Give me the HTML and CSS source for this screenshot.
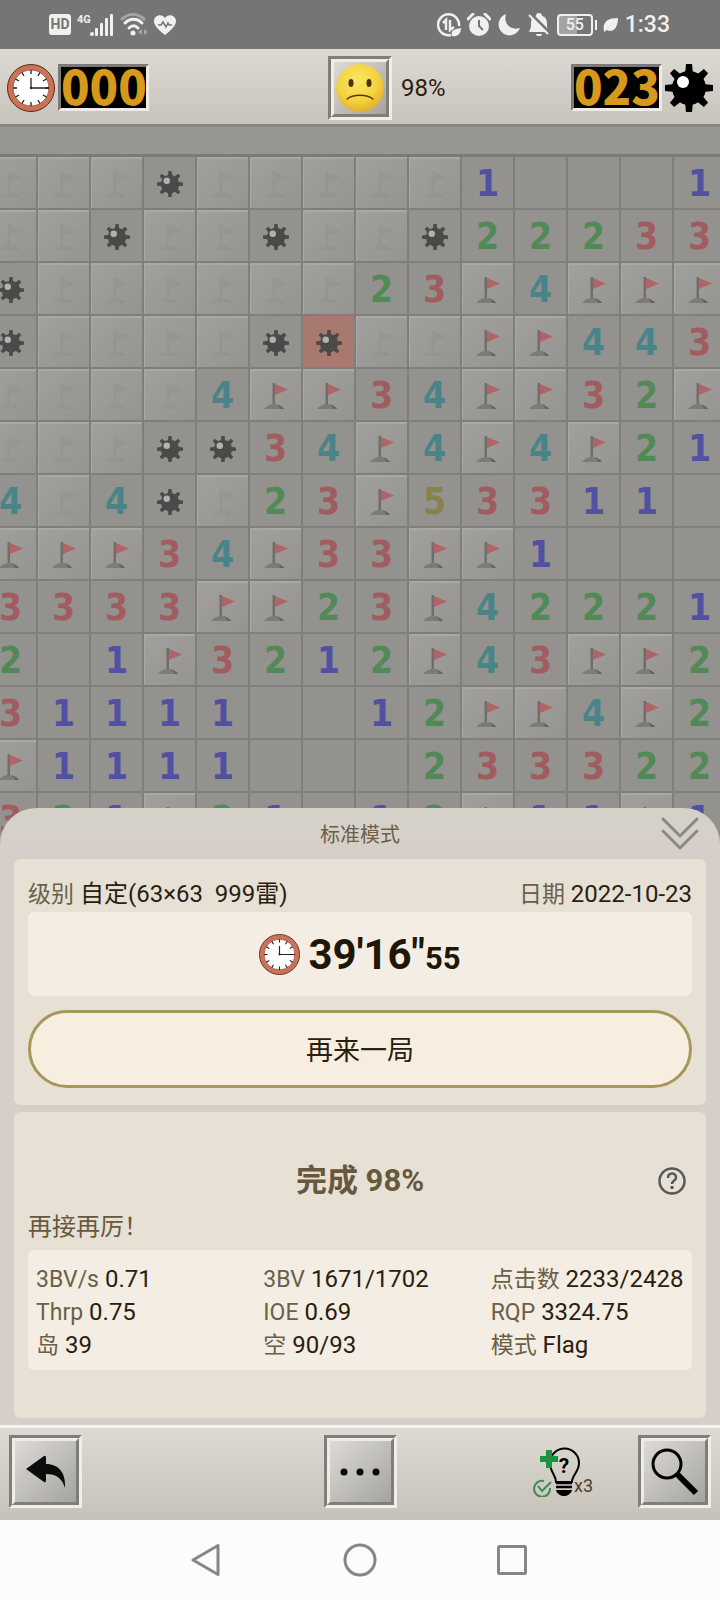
FILE: index.html
```html
<!DOCTYPE html>
<html lang="zh-CN">
<head>
  <meta charset="UTF-8">
  <meta name="viewport" content="width=device-width, initial-scale=1">
  <title>扫雷</title>
  <link rel="stylesheet" href="styles.css">
</head>
<body>
  <!-- Shared icons -->
  <svg class="icon-defs" aria-hidden="true">
    <symbol id="mine" viewBox="0 0 48 48">
      <g fill="currentColor">
        <circle cx="24" cy="24" r="17"/>
        <path d="M21 0h6l1 10h-8zM21 48h6l1-10h-8zM0 21v6l10 1v-8zM48 21v6l-10 1v-8z"/>
        <path transform="rotate(45 24 24)" d="M21 0h6l1 10h-8zM21 48h6l1-10h-8zM0 21v6l10 1v-8zM48 21v6l-10 1v-8z"/>
      </g>
      <circle class="mine-shine" cx="18" cy="18" r="6"/>
    </symbol>
    <symbol id="flag" viewBox="0 0 26 26">
      <path class="flag-cloth" d="M12 1L25 6.500L12 12z"/>
      <path class="flag-pole" d="M9.500 0h2.500v22h-2.500z"/>
      <path class="flag-base" d="M1 26C3 23 7 21 11 21S19 23 21 26z"/>
      <path class="flag-shade" d="M13 21C17 22 20 24 21 26H17C17 24 15 22 13 21z"/>
    </symbol>
    <symbol id="clock" viewBox="0 0 48 48">
      <circle cx="24" cy="24" r="23.500" fill="#cb7358" stroke="#5c2a1a" stroke-width="1"/>
      <circle cx="24" cy="24" r="18" fill="#fff" stroke="#a9583f" stroke-width="1"/>
      <g stroke="#222" stroke-width="1.300">
        <path d="M24 6v4M24 38v4M6 24h4M38 24h4"/>
        <path d="M15 8.500l2 3.500M33 8.500l-2 3.500M15 39.500l2-3.500M33 39.500l-2-3.500"/>
        <path d="M8.500 15l3.500 2M39.500 15l-3.500 2M8.500 33l3.500-2M39.500 33l-3.500-2"/>
        <path d="M24 14v10h18" fill="none"/>
      </g>
      <circle cx="24" cy="24" r="1.200" fill="#222"/>
    </symbol>
  </svg>

  <div class="status-bar">
    <div class="status-group">
      <span class="hd-badge">HD</span>
      <span class="signal">
        <span class="network">4G</span>
        <svg width="24" height="22" viewBox="0 0 24 22" fill="#f0f0f0">
          <circle cx="2" cy="20" r="2"/>
          <rect x="5" y="14" width="3" height="8" rx="1"/>
          <rect x="10" y="9" width="3" height="13" rx="1"/>
          <rect x="15" y="4" width="3" height="18" rx="1"/>
          <rect x="20" y="0" width="3" height="22" rx="1"/>
        </svg>
      </span>
      <svg width="28" height="24" viewBox="0 0 28 24" fill="none" stroke-width="3" stroke-linecap="round">
        <path d="M2 6C9 0 17 0 24 6" stroke="#a4a4a4"/>
        <path d="M5 10C10 5 17 5 22 10M9 15C12 12 15 12 18 15" stroke="#f0f0f0"/>
        <circle cx="13" cy="20" r="2.500" fill="#f0f0f0" stroke="none"/>
        <path d="M22 16v6l-4-3zM24 16v6l4-3z" fill="#a4a4a4" stroke="none"/>
      </svg>
      <svg width="22" height="20" viewBox="0 0 22 20">
        <path d="M11 20C5 15 0 11 0 6C0 0 8-2 11 3C14-2 22 0 22 6C22 11 17 15 11 20z" fill="#f0f0f0"/>
        <path d="M4 10h3l2-3l3 5l2-4l1 2h3" fill="none" stroke="#757575" stroke-width="1.500"/>
      </svg>
    </div>
    <div class="status-group">
      <svg width="24" height="24" viewBox="0 0 24 24" fill="none" stroke="#f0f0f0">
        <path d="M14 22A10.500 10.500 0 1 1 22 13" stroke-width="2.500"/>
        <path d="M6 10l3-3v10M13 7v10l4-3" stroke-width="2.500"/>
        <path d="M15 23C13 17 18 16 24 15C24 22 19 24 15 23z" fill="#f0f0f0" stroke="none"/>
      </svg>
      <svg width="24" height="24" viewBox="0 0 24 24">
        <circle cx="12" cy="13" r="10" fill="#f0f0f0"/>
        <path d="M1 6L6 1M23 6L18 1" stroke="#f0f0f0" stroke-width="3" stroke-linecap="round"/>
        <path d="M12 7v6l4 4" fill="none" stroke="#757575" stroke-width="2"/>
      </svg>
      <svg width="24" height="24" viewBox="0 0 24 24">
        <path d="M9 1A11 11 0 1 0 23 15C14 18 6 11 9 1z" fill="#f0f0f0"/>
      </svg>
      <svg width="24" height="24" viewBox="0 0 24 24">
        <path d="M9 3A3 3 0 0 1 15 3C19 4 20 7 20 11V14L22 19H2L4 14V9C4 6 6 4 9 3zM9 21H15A3 2 0 0 1 9 21z" fill="#f0f0f0"/>
        <path d="M4 1L24 21" stroke="#757575" stroke-width="3"/>
        <path d="M2 2L21 21" stroke="#f0f0f0" stroke-width="2"/>
      </svg>
      <span class="battery"><span class="battery-level">55</span></span>
      <svg width="16" height="16" viewBox="0 0 16 16">
        <path d="M1 14C-1 5 5 1 15 1C15 11 10 16 4 13L1 15zM3 12L11 5L4 11z" fill="#f0f0f0"/>
      </svg>
      <span class="time">1:33</span>
    </div>
  </div>

  <header class="game-header">
    <div class="counter-group">
      <svg class="header-icon"><use href="#clock"/></svg>
      <span class="counter">000</span>
    </div>
    <button class="bevel-btn face-btn" aria-label="新游戏">
      <span class="bevel-inner">
        <svg width="50" height="50" viewBox="0 0 50 50">
          <defs>
            <radialGradient id="face-fill" cx="45%" cy="35%" r="70%">
              <stop offset="0" stop-color="#fbe765"/>
              <stop offset="0.600" stop-color="#f4d240"/>
              <stop offset="1" stop-color="#dfa82c"/>
            </radialGradient>
          </defs>
          <circle cx="25" cy="25" r="24" fill="url(#face-fill)"/>
          <ellipse cx="16" cy="20" rx="2.500" ry="4" fill="#4a3008"/>
          <ellipse cx="34" cy="20" rx="2.500" ry="4" fill="#4a3008"/>
          <path d="M12 36C18 31 32 31 38 36" fill="none" stroke="#5a3a0a" stroke-width="1.600" stroke-linecap="round"/>
        </svg>
      </span>
    </button>
    <div class="header-right">
      <span class="progress">98%</span>
      <div class="counter-group">
        <span class="counter">023</span>
        <svg class="header-icon header-mine"><use href="#mine"/></svg>
      </div>
    </div>
  </header>

  <main class="board-wrap">
    <div class="board" id="board"></div>
  </main>

  <section class="sheet">
    <div class="sheet-head">
      <h2 class="sheet-title">标准模式</h2>
      <button class="collapse-btn" aria-label="收起">
        <svg width="38" height="34" viewBox="0 0 38 34" fill="none" stroke="#8a8886" stroke-width="3" stroke-linecap="round">
          <path d="M2 2L19 19L36 2M2 14L19 31L36 14"/>
        </svg>
      </button>
    </div>

    <div class="card result-card">
      <div class="info-row">
        <span><span class="label">级别</span> 自定(63×63&nbsp; 999雷)</span>
        <span><span class="label">日期</span> 2022-10-23</span>
      </div>
      <div class="time-box">
        <svg class="time-icon"><use href="#clock"/></svg>
        <span class="time-value">39'16"<small>55</small></span>
      </div>
      <button class="again-btn">再来一局</button>
    </div>

    <div class="card stats-card">
      <div class="stats-head">
        <h3 class="stats-title">完成 98%</h3>
        <button class="help-btn" aria-label="帮助">
          <svg width="28" height="28" viewBox="0 0 28 28" fill="none" stroke="#5a5856">
            <circle cx="14" cy="14" r="12.500" stroke-width="2.500"/>
            <path d="M10 11C10 5 18 5 18 10.500C18 13.500 14 13.500 14 17" stroke-width="2.500"/>
            <path d="M14 19v3" stroke-width="3"/>
          </svg>
        </button>
      </div>
      <p class="cheer">再接再厉！</p>
      <div class="stats">
        <span><span class="label">3BV/s</span> 0.71</span>
        <span><span class="label">3BV</span> 1671/1702</span>
        <span><span class="label">点击数</span> 2233/2428</span>
        <span><span class="label">Thrp</span> 0.75</span>
        <span><span class="label">IOE</span> 0.69</span>
        <span><span class="label">RQP</span> 3324.75</span>
        <span><span class="label">岛</span> 39</span>
        <span><span class="label">空</span> 90/93</span>
        <span><span class="label">模式</span> Flag</span>
      </div>
    </div>
  </section>

  <footer class="toolbar">
    <button class="bevel-btn tool-btn" aria-label="返回">
      <span class="bevel-inner">
        <svg width="40" height="34" viewBox="0 0 40 34">
          <path d="M0 14L18 1Q20 0 20 3V9C33 9 40 18 39 33C36 23 30 19 20 19V25Q20 28 18 27L0 14z" fill="#0c0c0c"/>
        </svg>
      </span>
    </button>
    <button class="bevel-btn tool-btn" aria-label="更多">
      <span class="bevel-inner">
        <svg width="40" height="8" viewBox="0 0 40 8">
          <circle cx="4" cy="4" r="3.500"/>
          <circle cx="20" cy="4" r="3.500"/>
          <circle cx="36" cy="4" r="3.500"/>
        </svg>
      </span>
    </button>
    <div class="toolbar-right">
      <button class="hint-btn" aria-label="提示">
        <svg width="60" height="50" viewBox="0 0 60 50">
          <path d="M23 35C23 28 17 25 17 16A14 14 0 0 1 46 16C46 25 39 28 39 35z" fill="none" stroke="#000" stroke-width="2"/>
          <path d="M23 36h16M23 40h16" stroke="#000" stroke-width="2.500"/>
          <path d="M23 43h16C38 47 34 49 31 49S24 47 23 43z"/>
          <path d="M7 9h6v-6h6v6h6v6h-6v6h-6v-6h-6z" fill="#1f9141"/>
          <path d="M11 34A8 8 0 1 0 17 41M5 39l4 5l9-9" fill="none" stroke="#3d8a52" stroke-width="2"/>
          <text x="31" y="26" class="hint-mark">?</text>
          <text x="41" y="45" class="hint-count">x3</text>
        </svg>
      </button>
      <button class="bevel-btn tool-btn" aria-label="缩放">
        <span class="bevel-inner">
          <svg width="48" height="48" viewBox="0 0 48 48" fill="none" stroke="#000">
            <circle cx="16" cy="16" r="14" stroke-width="3"/>
            <path d="M26 26L45 45" stroke-width="6"/>
          </svg>
        </span>
      </button>
    </div>
  </footer>

  <nav class="nav-bar">
    <button class="nav-btn" aria-label="后退">
      <svg width="34" height="34" viewBox="0 0 34 34"><path d="M3 17L28 2.500V31.500z"/></svg>
    </button>
    <button class="nav-btn" aria-label="主页">
      <svg width="34" height="34" viewBox="0 0 34 34"><circle cx="17" cy="17" r="15"/></svg>
    </button>
    <button class="nav-btn" aria-label="最近任务">
      <svg width="34" height="34" viewBox="0 0 34 34"><rect x="2.500" y="3.500" width="27" height="27" rx="1"/></svg>
    </button>
  </nav>

  <script>
    // f = covered with a hint flag, F = flag, m = mine, M = exploded mine
    const rows = [
      'fffmfffff1...1',
      'ffmffmffm22233',
      'mffffff23F4FFF',
      'mffffmMffFF443',
      'ffff4FF34FF32F',
      'fffmm34F4F4F21',
      '4f4mf23F53311.',
      'FFF34F33FF1...',
      '3333FF23F42221',
      '2.1F3212F43FF2',
      '31111..12FF4F2',
      'F1111...233322',
      '321F21.12F11F1'
    ];

    const icons = { f: 'flag', F: 'flag', m: 'mine', M: 'mine' };
    const types = { f: 'covered faint', F: 'covered', m: 'open', M: 'open exploded' };

    const board = document.getElementById('board');

    rows.forEach((row, y) => {
      [...row].forEach((c, x) => {
        const cell = document.createElement('button');
        cell.className = 'cell ' + (types[c] || 'open n' + c);
        cell.setAttribute('aria-label', `${y + 1}, ${x + 1}`);
        if (icons[c]) {
          cell.innerHTML = `<svg class="cell-icon"><use href="#${icons[c]}"/></svg>`;
        } else if (c !== '.') {
          cell.textContent = c;
        }
        board.appendChild(cell);
      });
    });
  </script>
</body>
</html>
```
FILE: styles.css
```css
* {
  box-sizing: border-box;
}

body {
  margin: 0;
  min-height: 100vh;
  display: flex;
  flex-direction: column;
  background: #fcfcfc;
  color: #2a2010;
  font-family: Roboto, "Noto Sans CJK SC", sans-serif;
  font-size: 24px;
}

button {
  padding: 0;
  border: none;
  background: none;
  color: inherit;
  font: inherit;
  cursor: pointer;
}

svg {
  display: block;
  flex: none;
}

.icon-defs {
  position: absolute;
  width: 0;
  height: 0;
}

/* Status bar */
.status-bar {
  display: flex;
  justify-content: space-between;
  align-items: center;
  height: 49px;
  padding: 0 50px 0 49px;
  background: #757575;
  color: #f0f0f0;
}

.status-group {
  display: flex;
  align-items: center;
  gap: 6px;
}

.hd-badge {
  width: 22px;
  border-radius: 3px;
  background: #f0f0f0;
  color: #757575;
  font-size: 14px;
  font-weight: 700;
  line-height: 21px;
  text-align: center;
}

.signal {
  display: flex;
}

.network {
  width: 13px;
  font-size: 11px;
  font-weight: 700;
  line-height: 11px;
}

.battery {
  display: flex;
  align-items: center;
  gap: 2px;
}

.battery::after {
  content: "";
  width: 2px;
  height: 10px;
  background: #f0f0f0;
}

.battery-level {
  width: 36px;
  border: 2px solid #f0f0f0;
  border-radius: 4px;
  background: linear-gradient(90deg, #a4a4a4 55%, #757575 55%);
  font-size: 16px;
  font-weight: 500;
  line-height: 18px;
  text-align: center;
}

.time {
  font-size: 23px;
  font-weight: 500;
}

/* Game header */
.game-header {
  display: grid;
  grid-template-columns: 1fr auto 1fr;
  align-items: center;
  height: 78px;
  padding: 2px 7px 0;
  border-bottom: 3px solid #8a8680;
  background: linear-gradient(#dddad4, #c8c3bb);
}

.counter-group {
  display: flex;
  align-items: center;
  gap: 3px;
}

.header-icon {
  width: 48px;
  height: 48px;
}

.header-mine {
  color: #000;
}

/* the cells override --shine, custom properties reach inside <use> */
.mine-shine {
  fill: var(--shine, #fff);
}

.counter {
  width: 91px;
  padding-bottom: 6px;
  border: 3px solid;
  border-color: #7b7a76 #efece7 #efece7 #7b7a76;
  background: #000;
  color: #d6991c;
  font-family: "Noto Sans CJK SC", sans-serif;
  font-size: 47px;
  font-weight: 900;
  line-height: 35px;
  text-align: center;
}

.header-right {
  display: flex;
  align-items: center;
  justify-content: space-between;
  padding-left: 9px;
}

.bevel-btn {
  display: flex;
  border: 3px solid;
  border-color: #807e79 #f1eeea #f1eeea #807e79;
}

.bevel-inner {
  display: flex;
  flex: 1;
  align-items: center;
  justify-content: center;
  border: 3px solid;
  border-color: #efece8 #807e79 #807e79 #efece8;
  background: linear-gradient(135deg, #dedbd6, #a5a39e);
}

.face-btn {
  width: 64px;
  height: 64px;
}

/* Board */
.board-wrap {
  overflow: hidden;
  border-top: 27px solid #989690;
  background: #94928e;
}

.board {
  display: grid;
  grid-template-columns: repeat(14, 53px);
  grid-auto-rows: 53px;
  margin-left: -15px;
  border-top: 3px solid #7c7a76;
}

.cell {
  display: flex;
  align-items: center;
  justify-content: center;
  padding-top: 2px;
  border: solid #807e7a;
  border-width: 0 2px 2px 0;
  background: #94928e;
  font-family: "DejaVu Sans Condensed", "DejaVu Sans", sans-serif;
  font-size: 37px;
  font-weight: 700;
  line-height: 1;
}

.covered {
  background: linear-gradient(135deg, #a2a09c, #969490);
  box-shadow: inset 1px 2px 0 #aaa8a4;
}

.exploded {
  background: #a9786f;
}

.cell-icon {
  --shine: #b4b2ae;
  width: 26px;
  height: 26px;
  color: #4c4a48;
}

.faint .cell-icon {
  opacity: 0.12;
  filter: grayscale(1);
}

.flag-cloth {
  fill: #b06467;
}

.flag-pole {
  fill: #706e6c;
}

.flag-base {
  fill: #7d7b77;
}

.flag-shade {
  fill: #666462;
}

.n1 {
  color: #5150a2;
}

.n2 {
  color: #528a57;
}

.n3 {
  color: #a15c60;
}

.n4 {
  color: #498488;
}

.n5 {
  color: #86824a;
}

/* Result sheet */
.sheet {
  position: relative;
  margin-top: -38px;
  padding: 0 14px 7px;
  border-radius: 36px 36px 0 0;
  background: linear-gradient(#d5d1c9, #d6cec8 60px);
}

.sheet-head {
  display: grid;
  grid-template-columns: 1fr auto 1fr;
  align-items: center;
  height: 51px;
  padding-right: 7px;
}

.sheet-title {
  grid-column: 2;
  margin: 0;
  padding-left: 7px;
  color: #6b5f47;
  font-size: 20px;
  font-weight: 400;
}

.collapse-btn {
  justify-self: end;
}

.card {
  border-radius: 6px;
  background: #e7e0d5;
}

.label {
  color: #6b5f47;
  font-size: 23px;
}

.result-card {
  padding: 18px 14px 17px;
  margin-bottom: 7px;
}

.info-row {
  display: flex;
  justify-content: space-between;
  line-height: 35px;
}

.time-box {
  display: flex;
  align-items: center;
  justify-content: center;
  gap: 8px;
  height: 84px;
  margin-bottom: 14px;
  border-radius: 6px;
  background: #f4ede3;
}

.time-icon {
  width: 41px;
  height: 41px;
}

.time-value {
  color: #1f1605;
  font-size: 42px;
  font-weight: 700;
}

.time-value small {
  font-size: 31px;
}

.again-btn {
  display: block;
  width: 100%;
  height: 78px;
  padding-bottom: 2px;
  border: 3px solid #a9965b;
  border-radius: 39px;
  background: #f7eee0;
  font-size: 27px;
}

.stats-card {
  padding: 46px 14px 48px;
}

.stats-head {
  display: grid;
  grid-template-columns: 1fr auto 1fr;
  align-items: center;
  padding-right: 6px;
}

.stats-title {
  grid-column: 2;
  margin: 0;
  padding-left: 6px;
  color: #66583d;
  font-size: 31px;
  font-weight: 700;
  line-height: 46px;
}

.help-btn {
  justify-self: end;
}

.cheer {
  margin: 0;
  color: #66583d;
  font-size: 24px;
  line-height: 46px;
}

.stats {
  display: grid;
  grid-template-columns: repeat(3, minmax(0, 1fr));
  column-gap: 34px;
  padding: 13px 8px 8px;
  border-radius: 6px;
  background: #f4ede3;
  line-height: 33px;
  white-space: nowrap;
}

/* Toolbar */
.toolbar {
  display: grid;
  grid-template-columns: 1fr auto 1fr;
  padding: 7px 9px 12px;
  border-top: 3px solid #f4f2ef;
  background: linear-gradient(#dbdad3, #c7c2b9);
}

.tool-btn {
  width: 73px;
  height: 73px;
}

.toolbar-right {
  display: flex;
  align-items: center;
  justify-content: flex-end;
  gap: 45px;
}

.hint-mark {
  font-size: 21px;
  font-weight: 700;
  text-anchor: middle;
}

.hint-count {
  fill: #4a4030;
  font-size: 18px;
}

/* System navigation */
.nav-bar {
  display: flex;
  align-items: center;
  justify-content: center;
  gap: 119px;
  height: 80px;
}

.nav-btn svg {
  fill: none;
  stroke: #868686;
  stroke-width: 3;
  stroke-linejoin: round;
}
```
